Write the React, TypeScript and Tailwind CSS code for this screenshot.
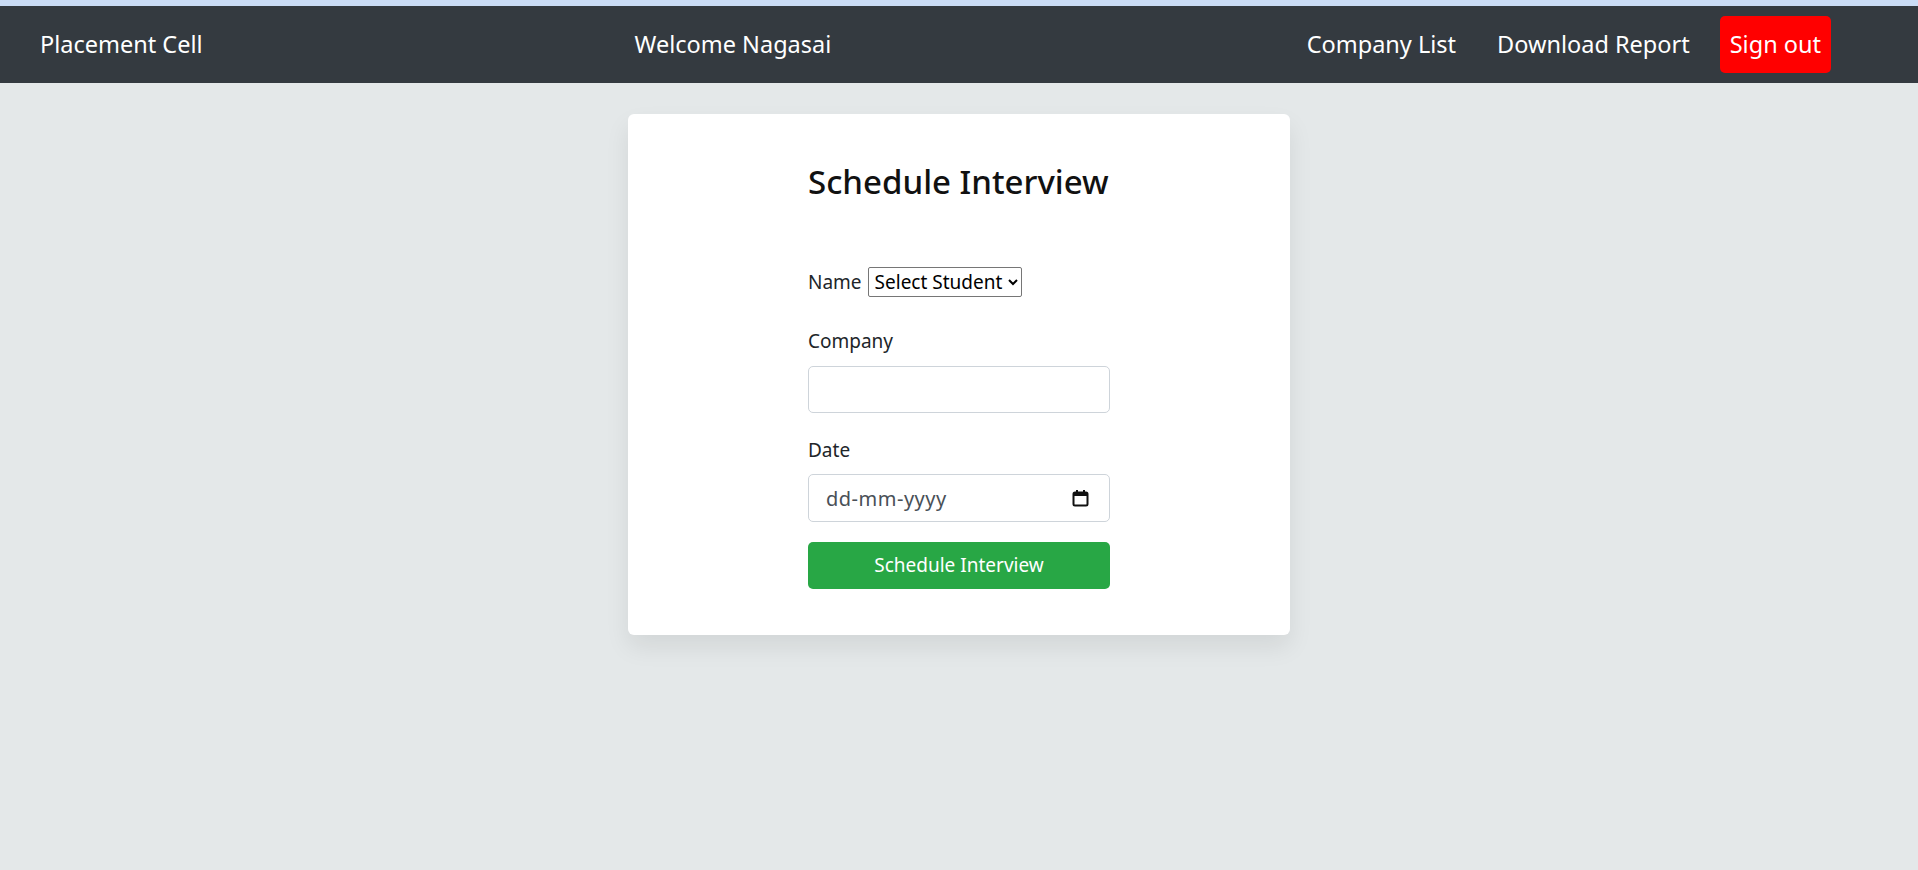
import { useState } from "react";

export default function App() {
  const [company, setCompany] = useState("");
  const [date, setDate] = useState("");

  return (
    <div
      className="min-h-[870px] bg-[#e4e8e9] text-[#212529]"
      style={{ fontFamily: '"Noto Sans", "Open Sans", sans-serif' }}
    >
      {/* strip above the nav */}
      <div className="h-[6px] bg-[#cadcf5]" />

      {/* Navbar */}
      <nav className="flex h-[77px] items-center bg-[#343a40] text-[23.5px] text-white">
        <a className="ml-[40px]">Placement Cell</a>
        <span className="ml-[432px]">Welcome Nagasai</span>
        <div className="ml-auto mr-[87px] flex items-center">
          <a className="mr-[41px]">Company List</a>
          <a className="mr-[30px]">Download Report</a>
          <button className="h-[57px] rounded-[5px] bg-[#ff0000] px-[10px] text-white">
            Sign out
          </button>
        </div>
      </nav>

      {/* Card */}
      <div className="mx-auto mt-[31px] h-[521px] w-[662px] rounded-[6px] bg-white shadow-[0_12px_24px_rgba(0,0,0,0.08)]">
        <form
          className="mx-auto flex w-[302px] flex-col pt-[44px]"
          onSubmit={(e) => e.preventDefault()}
        >
          <h2 className="whitespace-nowrap text-[33px] font-medium leading-[48px] text-[#111]">
            Schedule Interview
          </h2>

          <div className="mt-[61px] flex items-center text-[19px]">
            <label className="mr-[6px]">Name</label>
            <select className="h-[30px] rounded-[2px] border border-[#767676] bg-white px-[2px] text-[19px] text-black">
              <option>Select Student</option>
            </select>
          </div>

          <label className="mt-[32px] text-[19px] leading-[24px]">Company</label>
          <input
            value={company}
            onChange={(e) => setCompany(e.target.value)}
            className="mt-[13px] h-[47px] rounded-[5px] border border-[#ced4da] px-[15px] text-[19px] outline-none"
          />

          <label className="mt-[25px] text-[19px] leading-[24px]">Date</label>
          <div className="relative mt-[12px]">
            <input
              value={date}
              onChange={(e) => setDate(e.target.value)}
              placeholder="dd-mm-yyyy"
              className="h-[48px] w-full rounded-[5px] border border-[#ced4da] px-[17px] text-[20px] tracking-[0.5px] text-[#495057] outline-none placeholder:text-[#495057]"
            />
            <svg
              className="absolute right-[21px] top-[15px]"
              width="17"
              height="18"
              viewBox="0 0 17 18"
            >
              <rect x="1.5" y="3.5" width="14" height="13" rx="1.5" fill="none" stroke="#111" strokeWidth="2" />
              <rect x="1.5" y="3.5" width="14" height="3.5" fill="#111" />
              <rect x="4" y="1" width="2" height="3" fill="#111" />
              <rect x="11" y="1" width="2" height="3" fill="#111" />
            </svg>
          </div>

          <button
            type="submit"
            className="mt-[20px] h-[47px] rounded-[5px] bg-[#28a745] text-[19px] text-white"
          >
            Schedule Interview
          </button>
        </form>
      </div>
    </div>
  );
}
